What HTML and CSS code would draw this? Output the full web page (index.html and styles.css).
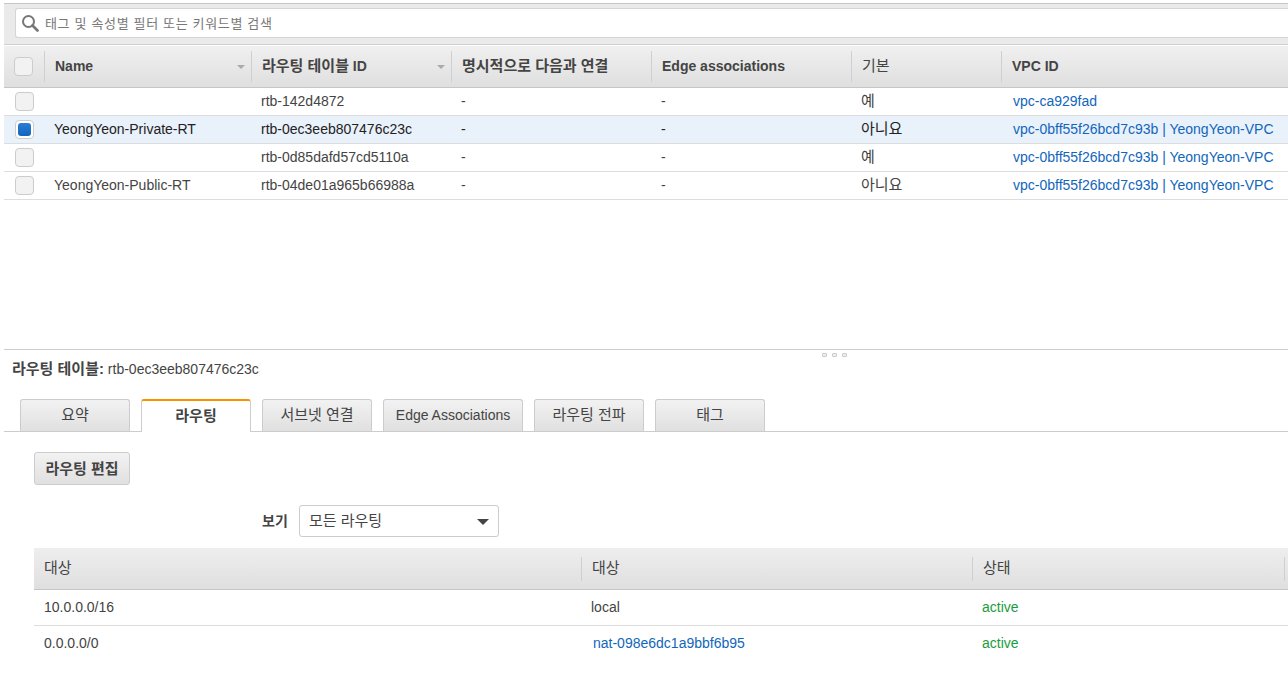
FILE: index.html
```html
<!DOCTYPE html>
<html lang="ko">

<head>
    <meta charset="UTF-8">
    <title>라우팅 테이블</title>
    <link rel="stylesheet" href="styles.css">
</head>

<body>
    <section class="top-pane">
        <div class="filter-bar">
            <div class="search-box">
                <svg class="search-icon" width="18" height="18" viewBox="0 0 18 18">
                    <circle cx="7.5" cy="7.5" r="5.5" fill="none" stroke="#777" stroke-width="2"></circle>
                    <path d="M11.5 11.5L16.5 16.5" stroke="#777" stroke-width="2.6" stroke-linecap="round"></path>
                </svg>
                <span class="search-hint">태그 및 속성별 필터 또는 키워드별 검색</span>
            </div>
        </div>
        <div class="rt-row rt-head">
            <div class="rt-check"><span class="check check-head"></span></div>
            <div class="col-head">Name<span class="sort"></span></div>
            <div class="col-head"><span class="ko">라우팅 테이블</span> ID<span class="sort"></span></div>
            <div class="col-head"><span class="ko">명시적으로 다음과 연결</span></div>
            <div class="col-head">Edge associations</div>
            <div class="col-head"><span class="ko thin">기본</span></div>
            <div class="col-head">VPC ID</div>
        </div>
        <div class="rt-row">
            <div class="rt-check"><span class="check"></span></div>
            <div></div>
            <div>rtb-142d4872</div>
            <div>-</div>
            <div>-</div>
            <div class="ko-cell">예</div>
            <div class="vpc"><a>vpc-ca929fad</a></div>
        </div>
        <div class="rt-row selected">
            <div class="rt-check"><span class="check checked"></span></div>
            <div>YeongYeon-Private-RT</div>
            <div>rtb-0ec3eeb807476c23c</div>
            <div>-</div>
            <div>-</div>
            <div class="ko-cell">아니요</div>
            <div class="vpc"><a>vpc-0bff55f26bcd7c93b | YeongYeon-VPC</a></div>
        </div>
        <div class="rt-row">
            <div class="rt-check"><span class="check"></span></div>
            <div></div>
            <div>rtb-0d85dafd57cd5110a</div>
            <div>-</div>
            <div>-</div>
            <div class="ko-cell">예</div>
            <div class="vpc"><a>vpc-0bff55f26bcd7c93b | YeongYeon-VPC</a></div>
        </div>
        <div class="rt-row">
            <div class="rt-check"><span class="check"></span></div>
            <div>YeongYeon-Public-RT</div>
            <div>rtb-04de01a965b66988a</div>
            <div>-</div>
            <div>-</div>
            <div class="ko-cell">아니요</div>
            <div class="vpc"><a>vpc-0bff55f26bcd7c93b | YeongYeon-VPC</a></div>
        </div>
    </section>

    <section class="detail-pane">
        <div class="grip"><span></span><span></span><span></span></div>
        <div class="detail-title"><b class="ko">라우팅 테이블:</b> rtb-0ec3eeb807476c23c</div>
        <div class="tabs">
            <div class="tab ko">요약</div>
            <div class="tab active ko">라우팅</div>
            <div class="tab ko">서브넷 연결</div>
            <div class="tab tab-wide">Edge Associations</div>
            <div class="tab ko">라우팅 전파</div>
            <div class="tab ko">태그</div>
        </div>
        <div class="tab-body">
            <button type="button" class="edit-btn">라우팅 편집</button>
            <div class="view-line">
                <label class="view-label">보기</label>
                <div class="view-select">모든 라우팅<span class="caret"></span></div>
            </div>
            <div class="route-row route-head">
                <div class="ko">대상</div>
                <div class="ko">대상</div>
                <div class="ko">상태</div>
            </div>
            <div class="route-row">
                <div>10.0.0.0/16</div>
                <div class="route-local">local</div>
                <div class="active-text">active</div>
            </div>
            <div class="route-row">
                <div>0.0.0.0/0</div>
                <div class="route-link"><a>nat-098e6dc1a9bbf6b95</a></div>
                <div class="active-text">active</div>
            </div>
        </div>
    </section>
</body>

</html>
```

FILE: styles.css
```css
html,
body {
    height: 100%;
}

body {
    font-family: "Liberation Sans", Arial, "Noto Sans CJK KR", sans-serif;
    font-size: 14px;
    color: #444;
    margin: 0;
    padding: 3px 0 0 4px;
    box-sizing: border-box;
    overflow: hidden;
    background: #fff;
}

a {
    color: #1166bb;
}

/* korean text runs wider in the original */
.ko {
    font-size: 15px;
}

.thin {
    font-weight: normal;
}

/* top pane */
.top-pane {
    height: 346px;
}

.filter-bar {
    height: 42px;
    box-sizing: border-box;
    padding: 4px 0 0 11px;
    background: #eaeaea;
    border-top: 1px solid #c6c6c6;
    border-bottom: 1px solid #cfcfcf;
}

.search-box {
    height: 28px;
    display: flex;
    align-items: center;
    background: #fff;
    border: 1px solid #d5d5d5;
    border-right: 0;
    border-radius: 3px 0 0 3px;
}

.search-icon {
    margin-left: 5px;
    flex: none;
}

.search-hint {
    margin-left: 6px;
    padding-bottom: 2px;
    font-size: 13px;
    color: #777;
    letter-spacing: 0.66px;
}

.rt-row {
    display: grid;
    grid-template-columns: 40px 207px 200px 200px 200px 150px 1fr;
    height: 27px;
    align-items: center;
    border-bottom: 1px solid #dddddd;
    white-space: nowrap;
}

.rt-row > div {
    padding-left: 10px;
    padding-bottom: 2px;
}

.rt-row > .rt-check {
    padding-left: 11px;
    padding-bottom: 0;
    display: flex;
}

.rt-row > .ko-cell {
    font-size: 15px;
    padding-bottom: 5px;
}

.rt-head {
    height: 41px;
    margin-top: 1px;
    background: linear-gradient(#f0f0f0, #dfdfdf);
    border-bottom: 1px solid #c6c6c6;
    font-weight: bold;
    color: #444;
}

.rt-row > .col-head {
    height: 31px;
    padding-bottom: 0;
    line-height: 30px;
    border-left: 1px solid #cfcfcf;
    position: relative;
}

.selected {
    background: #e9f1fb;
    color: #222;
}

.rt-row > .vpc {
    padding-left: 12px;
}

.check {
    display: block;
    width: 19px;
    height: 19px;
    box-sizing: border-box;
    background: #f2f2f2;
    border: 1px solid #cccccc;
    border-radius: 4px;
}

.check-head {
    margin-left: -1px;
}

.checked {
    background: #fff;
    position: relative;
}

.checked::after {
    content: "";
    position: absolute;
    left: 2px;
    top: 2px;
    width: 13px;
    height: 13px;
    border-radius: 3px;
    background: linear-gradient(#2a7cd6, #1166bb);
}

.sort {
    position: absolute;
    right: 6px;
    top: 14px;
    border-left: 4px solid transparent;
    border-right: 4px solid transparent;
    border-top: 4px solid #aaa;
}

/* detail pane */
.detail-pane {
    border-top: 1px solid #cccccc;
    position: relative;
}

.grip {
    position: absolute;
    left: 818px;
    top: 3px;
    display: flex;
    gap: 5px;
}

.grip span {
    width: 3px;
    height: 2px;
    background: #eeeeee;
    border: 1px solid #cccccc;
    border-radius: 1px;
}

.detail-title {
    padding: 10px 0 0 8px;
    height: 39px;
    line-height: 18px;
    box-sizing: border-box;
}

.detail-title b {
    color: #444;
}

.tabs {
    margin-top: 10px;
    padding-left: 16px;
    display: flex;
    gap: 11px;
    height: 32px;
    border-bottom: 1px solid #cccccc;
}

.tab {
    width: 110px;
    height: 32px;
    box-sizing: border-box;
    background: linear-gradient(#f2f2f2, #e0e0e0);
    border: 1px solid #cccccc;
    border-bottom: 0;
    border-radius: 3px 3px 0 0;
    text-align: center;
    line-height: 30px;
}

.tab-wide {
    width: 140px;
    line-height: 31px;
}

.active {
    height: 33px;
    background: #fff;
    border-top: 2px solid #f79400;
    font-weight: bold;
    line-height: 30px;
}

.tab-body {
    padding: 20px 0 0 30px;
}

.edit-btn {
    display: block;
    width: 96px;
    height: 33px;
    padding: 0 0 2px;
    font-family: inherit;
    font-size: 15px;
    font-weight: bold;
    color: #444;
    background: linear-gradient(#f2f2f2, #e0e0e0);
    border: 1px solid #cccccc;
    border-radius: 3px;
}

.view-line {
    display: flex;
    align-items: center;
    margin: 20px 0 11px 228px;
}

.view-label {
    width: 37px;
    padding-bottom: 2px;
    font-weight: bold;
}

.view-select {
    width: 200px;
    height: 32px;
    box-sizing: border-box;
    padding-left: 9px;
    font-size: 15px;
    line-height: 30px;
    border: 1px solid #cccccc;
    border-radius: 3px;
    position: relative;
}

.caret {
    position: absolute;
    right: 9px;
    top: 13px;
    border-left: 6px solid transparent;
    border-right: 6px solid transparent;
    border-top: 6px solid #444;
}

.route-row {
    display: grid;
    grid-template-columns: 547px 391px 1fr;
    height: 35px;
    line-height: 33px;
    align-items: center;
    border-bottom: 1px solid #dddddd;
}

.route-row > div {
    padding-left: 10px;
}

.route-row:last-child {
    border-bottom: 0;
}

.route-head {
    height: 41px;
    background: linear-gradient(#eeeeee, #dfdfdf);
    border-bottom: 1px solid #c6c6c6;
}

.route-head > div {
    height: 24px;
    line-height: 22px;
}

.route-head > div + div {
    border-left: 1px solid #cfcfcf;
}

.route-head > div:last-child {
    border-right: 1px solid #cfcfcf;
    margin-right: 3px;
}

.route-row > .route-local {
    padding-left: 10px;
}

.route-row > .route-link {
    padding-left: 12px;
}

.active-text {
    color: #1a9c3e;
}
```
